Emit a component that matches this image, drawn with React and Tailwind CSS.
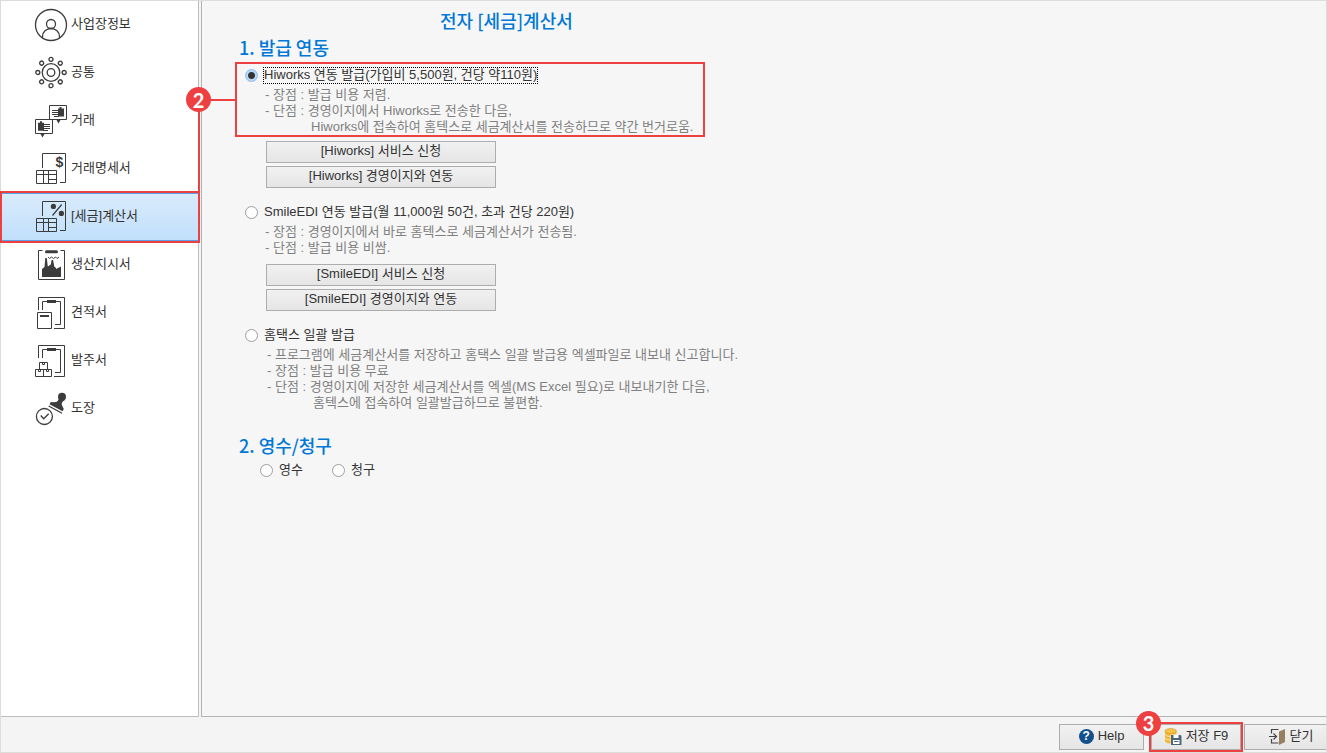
import React, { useState } from "react";
import clsx from "clsx";

function ProfileIcon() {
  return (
    <g strokeWidth="1.3">
      <circle cx="17" cy="17" r="15.5" />
      <circle cx="17" cy="16" r="4.5" />
      <path d="M8.5 30v-1.5a8.5 8 0 0 1 17 0V30" />
    </g>
  );
}

function CommonIcon() {
  return (
    <g strokeWidth="1.3">
      <circle cx="17" cy="16.5" r="8.8" />
      <circle cx="17" cy="16.5" r="3.8" />
      {[0, 45, 90, 135, 180, 225, 270, 315].map((deg) => (
        <circle key={deg} cx="17" cy="3.3" r="2" transform={`rotate(${deg} 17 16.5)`} />
      ))}
    </g>
  );
}

function TradeIcon() {
  return (
    <>
      <path d="M15.5 1.5h17v14h-17zM1.5 15.5h17v14h-17z" />
      <path d="M22.5 16h4l-2 3.5zM6.5 30h4l-2 3.5z" fill="#3c3c3c" stroke="none" />
      <path d="M30 4.5v8h-6v-8h1.5v-1.5h2v1.5zM4 18.8h2v-1.5h2v1.500h2v8H4z" fill="#3c3c3c" stroke="none" />
      <path d="M18 6.500h6M18 8.500h6M18 10.500h6M20 12.500h5M10 20.500h6M10 22.500h6M10 24.500h6M9 26.500h5" />
    </>
  );
}

function SheetBase() {
  return (
    <>
      <path d="M8.5 16V1.5h23v29H26" />
      <path d="M2.5 18.5h20v13h-20zM2.5 22.5h20M9.5 18.5v13M14.5 18.5v13M14.5 27.5h8" />
    </>
  );
}

function StatementIcon() {
  return (
    <>
      <SheetBase />
      <text
        x="25.5"
        y="14.5"
        textAnchor="middle"
        fill="#3c3c3c"
        stroke="none"
        className="font-['Liberation_Sans',sans-serif] text-[14px] font-bold"
      >
        $
      </text>
    </>
  );
}

function TaxIcon() {
  return (
    <>
      <SheetBase />
      <circle cx="19.4" cy="6.4" r="2.6" fill="#3c3c3c" stroke="none" />
      <circle cx="27.4" cy="13.4" r="2.6" fill="#3c3c3c" stroke="none" />
      <path d="M27.7 4.5 18.5 15.5" strokeWidth="1.2" />
    </>
  );
}

function FactoryIcon() {
  return (
    <>
      <path d="M8.5 2.5h-4v29h26v-29h-4" />
      <path d="M12.5 3.7h10" strokeWidth="3" strokeLinecap="round" />
      <path d="m14 9 1.5 1.5L17.5 9l2 1.5 2-1.5 1.5 1.5 2-1.5" />
      <path d="M8 29V21l2.500-2 .8-9h1.500l1 8.500 3-2 .8-4.500h1.500l1.200 6.500 1.700 1.500v1l5-2.500V29z" fill="#3c3c3c" stroke="none" />
    </>
  );
}

function ClipboardBase() {
  return (
    <>
      <path d="M4.5 14V1.5h26v31H20M8.5 14V5.5h18v23H21" />
      <path d="M13 4h9v3h-9z" fill="#3c3c3c" stroke="none" />
    </>
  );
}

function QuoteIcon() {
  return (
    <>
      <ClipboardBase />
      <path d="M3.5 16.5h14v16h-14z" />
      <path d="M6 20h9" strokeWidth="2" />
    </>
  );
}

function OrderIcon() {
  return (
    <>
      <ClipboardBase />
      <path d="M5.5 18.5h8v7h-8zM1.5 25.5h16v7h-16zM9.5 25.5v7" />
      <path d="M8.5 18.5v2h2v-2M4.5 25.5v2h2v-2M12.5 25.5v2h2v-2" />
    </>
  );
}

function StampIcon() {
  return (
    <>
      <circle cx="10.4" cy="24.5" r="8" strokeWidth="1.3" />
      <path d="m6.700 23.500 3 3.200 5-5" strokeWidth="1.3" />
      <g fill="#3c3c3c" stroke="none">
        <circle cx="28" cy="4.700" r="4" />
        <path d="m25 4.500 6 3.500c-2 1-3.500 2.500-3.300 4.500l1.300 3 .8 1.500-1.300 2.200L15.500 12.300l1.300-2.300 2.200.3 3.200-.3c1.800-.8 3-2.800 2.800-5.500z" />
      </g>
      <path d="m14.700 14 13.300 7.200" strokeWidth="1.300" />
    </>
  );
}

const menu = [
  { label: "사업장정보", Icon: ProfileIcon },
  { label: "공통", Icon: CommonIcon },
  { label: "거래", Icon: TradeIcon },
  { label: "거래명세서", Icon: StatementIcon },
  { label: "[세금]계산서", Icon: TaxIcon, active: true },
  { label: "생산지시서", Icon: FactoryIcon },
  { label: "견적서", Icon: QuoteIcon },
  { label: "발주서", Icon: OrderIcon },
  { label: "도장", Icon: StampIcon },
];

function Badge({ children, className }) {
  return (
    <span
      className={clsx(
        "absolute z-10 flex size-[25px] items-center justify-center rounded-full bg-[#ee3f41] font-['Lato'] text-xl leading-none font-bold text-white",
        className
      )}
    >
      {children}
    </span>
  );
}

function MenuItem({ label, Icon, active }) {
  return (
    <li className="relative">
      <button
        type="button"
        className={clsx(
          "flex h-12 w-full items-center gap-[3px] pl-[33px] text-left",
          active && "border-y border-[#5ba3e6] bg-linear-to-b from-[#d9ebfc] to-[#c2dffb]"
        )}
      >
        <svg width="34" height="34" viewBox="0 0 34 34" fill="none" stroke="#3c3c3c" strokeWidth="1" aria-hidden="true">
          <Icon />
        </svg>
        <span className="pb-0.5">{label}</span>
      </button>
      {active && (
        <>
          <span className="pointer-events-none absolute -inset-y-0.5 -right-0.5 -left-px z-10 border-2 border-[#ee3f41]" />
          {/* line up to badge 2 */}
          <span className="absolute -right-0.5 bottom-full z-10 h-[92px] w-0.5 bg-[#ee3f41]" />
        </>
      )}
    </li>
  );
}

function Option({ name, value, current, onChange, children }) {
  const checked = current === value;
  return (
    <label className="flex h-[22px] w-fit items-center gap-[5px]">
      <input
        type="radio"
        name={name}
        value={value}
        checked={checked}
        onChange={() => onChange(value)}
        className="size-[13px] appearance-none rounded-full border border-[#9d9d9d] bg-white checked:border-[#8ebce8] checked:bg-[radial-gradient(circle,#333_0_3px,#b5d8f7_4px)]"
      />
      <span
        className={clsx("border border-dotted pb-0.5 leading-[13px]", checked ? "border-black" : "border-transparent")}
      >
        {children}
      </span>
    </label>
  );
}

function Heading({ as: Tag, className, children }) {
  return (
    <Tag className={clsx("font-['Noto_Sans_CJK_KR',sans-serif] text-lg leading-6 font-medium text-[#0078d7]", className)}>
      {children}
    </Tag>
  );
}

function WideButton({ children }) {
  return (
    <button
      type="button"
      className="h-[22px] w-[230px] border border-[#adadad] bg-linear-to-b from-[#f1f1f1] to-[#e5e5e5] pb-0.5 leading-4"
    >
      {children}
    </button>
  );
}

const footerButton =
  "flex h-[26px] items-center justify-center gap-1 border border-[#adadad] bg-linear-to-b from-[#f1f1f1] to-[#e5e5e5] pb-px";

export default function App() {
  const [issue, setIssue] = useState("hiworks");
  const [receipt, setReceipt] = useState("");

  return (
    <div className="flex min-h-screen flex-col border border-[#dcdcdc] bg-[#f4f4f4] font-['Liberation_Sans','Noto_Sans_CJK_KR',sans-serif] text-[13px] leading-4 text-[#333]">
      <div className="flex flex-1 gap-0.5">
        <nav className="w-[198px] shrink-0 border-r border-b border-[#bdbdbd] bg-white">
          <ul>
            {menu.map((item) => (
              <MenuItem key={item.label} {...item} />
            ))}
          </ul>
        </nav>

        <main className="flex-1 border-b border-l border-[#b3b3b3] bg-[#f6f6f6] pt-[7px] pl-[33px]">
          <Heading as="h1" className="pl-[205px]">
            전자 [세금]계산서
          </Heading>

          <Heading as="h2" className="mt-[3px] pl-1">
            1. 발급 연동
          </Heading>
          <section className="relative mt-[3px] w-[470px] border-2 border-[#ee3f41] pl-2">
            <Badge className="-left-[51px] top-[23px]">2</Badge>
            <span className="absolute right-full top-[35px] h-0.5 w-7 bg-[#ee3f41]" />
            <Option name="issue" value="hiworks" current={issue} onChange={setIssue}>
              Hiworks 연동 발급(가입비 5,500원, 건당 약110원)
            </Option>
            <div className="mt-px pl-5 whitespace-nowrap text-[#808080]">
              <p>- 장점 : 발급 비용 저렴.</p>
              <p>- 단점 : 경영이지에서 Hiworks로 전송한 다음,</p>
              <p className="pl-[46px]">Hiworks에 접속하여 홈텍스로 세금계산서를 전송하므로 약간 번거로움.</p>
            </div>
          </section>
          <div className="mt-1 flex flex-col items-start gap-[3px] pl-[31px]">
            <WideButton>[Hiworks] 서비스 신청</WideButton>
            <WideButton>[Hiworks] 경영이지와 연동</WideButton>
          </div>

          <section className="mt-[13px] pl-2.5">
            <Option name="issue" value="smileedi" current={issue} onChange={setIssue}>
              SmileEDI 연동 발급(월 11,000원 50건, 초과 건당 220원)
            </Option>
            <div className="mt-px pl-5 text-[#808080]">
              <p>- 장점 : 경영이지에서 바로 홈텍스로 세금계산서가 전송됨.</p>
              <p>- 단점 : 발급 비용 비쌈.</p>
            </div>
            <div className="mt-2 flex flex-col items-start gap-[3px] pl-[21px]">
              <WideButton>[SmileEDI] 서비스 신청</WideButton>
              <WideButton>[SmileEDI] 경영이지와 연동</WideButton>
            </div>
          </section>

          <section className="mt-[13px] pl-2.5">
            <Option name="issue" value="hometax" current={issue} onChange={setIssue}>
              홈택스 일괄 발급
            </Option>
            <div className="mt-px pl-[22px] text-[#808080]">
              <p>- 프로그램에 세금계산서를 저장하고 홈택스 일괄 발급용 엑셀파일로 내보내 신고합니다.</p>
              <p>- 장점 : 발급 비용 무료</p>
              <p>- 단점 : 경영이지에 저장한 세금계산서를 엑셀(MS Excel 필요)로 내보내기한 다음,</p>
              <p className="pl-[46px]">홈텍스에 접속하여 일괄발급하므로 불편함.</p>
            </div>
          </section>

          <Heading as="h2" className="mt-[22px] pl-1">
            2. 영수/청구
          </Heading>
          <div className="mt-0.5 flex gap-7 pl-[25px]">
            <Option name="receipt" value="receipt" current={receipt} onChange={setReceipt}>
              영수
            </Option>
            <Option name="receipt" value="charge" current={receipt} onChange={setReceipt}>
              청구
            </Option>
          </div>
        </main>
      </div>

      <footer className="flex h-[35px] items-center justify-end pt-1">
        <button type="button" className={clsx(footerButton, "mr-[5px] w-[85px]")}>
          <span
            aria-hidden="true"
            className="flex size-[15px] items-center justify-center rounded-full bg-[#14508c] text-xs leading-none font-bold text-white"
          >
            ?
          </span>
          <span>Help</span>
        </button>
        <div className="relative border-2 border-[#ee3f41]">
          <Badge className="-left-[15px] -top-[13px]">3</Badge>
          <button type="button" className={clsx(footerButton, "w-[90px]")}>
            <svg width="18" height="17" viewBox="0 0 18 17" aria-hidden="true">
              <path d="M1 3v10c0 1.500 2.500 2.500 5.500 2.500S12.500 14.500 12.500 13V3" fill="#f2b632" />
              <path d="M1 6.300c1 3 10.500 3 11.500 0M1 9.800c1 3 10.500 3 11.500 0" fill="none" stroke="#fdeec8" strokeWidth=".8" />
              <ellipse cx="6.700" cy="3" rx="5.700" ry="2.500" fill="#f5c24c" stroke="#c98f1b" strokeWidth=".5" />
              <path d="M6.500 6.500H18V17H6.500z" fill="#f0f0f0" />
              <path d="M7 7h9.500l1 1v9H7z" fill="#4c6478" />
              <path d="M9.500 7h5v3h-5zM9 12h6.500v4H9z" fill="#fff" />
              <path d="M10 13.500h4.500" stroke="#4c6478" />
            </svg>
            <span>저장 F9</span>
          </button>
        </div>
        <button type="button" className={clsx(footerButton, "ml-px w-[82px] border-r-0 pl-2.5")}>
          <svg width="18" height="17" viewBox="0 0 18 17" fill="none" aria-hidden="true">
            <path d="M3.500 5.500v-4h7M3.500 11v4h7M1 8.500h6.500M5.500 5.500l3 3-3 3" stroke="#444" strokeWidth="1.200" />
            <path d="M11 3.500 17 1v13l-6 3z" fill="#95805f" />
          </svg>
          <span>닫기</span>
        </button>
      </footer>
    </div>
  );
}
